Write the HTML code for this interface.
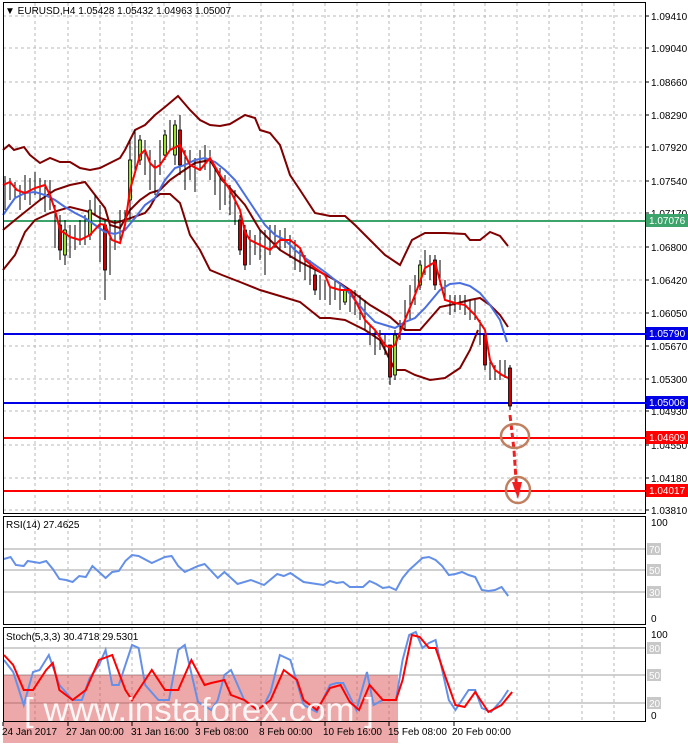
<!DOCTYPE html>
<html><head><style>
body{margin:0;background:#fff;}
svg text{font-family:"Liberation Sans",sans-serif;font-size:10px;fill:#000;}
</style></head><body>
<svg width="688" height="743" viewBox="0 0 688 743" xmlns="http://www.w3.org/2000/svg">
<rect width="688" height="743" fill="#fff"/>
<g stroke="#b8b8b8" stroke-dasharray="3,3" stroke-width="1">
<path d="M35 3V722M68 3V722M100 3V722M132 3V722M164 3V722M197 3V722M229 3V722M261 3V722M293 3V722M325 3V722M357 3V722M389 3V722M421 3V722M454 3V722M485 3V722M517 3V722M549 3V722M582 3V722M614 3V722"/>
<path d="M3 16H645M3 48H645M3 82H645M3 115H645M3 147H645M3 181H645M3 213H645M3 247H645M3 280H645M3 313H645M3 346H645M3 379H645M3 411H645M3 445H645M3 478H645M3 510H645"/>
</g>
<line x1="3" y1="221" x2="645" y2="221" stroke="#3ca46a" stroke-width="2"/>
<line x1="3" y1="334" x2="645" y2="334" stroke="#0000e6" stroke-width="2"/>
<line x1="3" y1="403" x2="645" y2="403" stroke="#0000e6" stroke-width="2"/>
<line x1="3" y1="438" x2="645" y2="438" stroke="#f00" stroke-width="2"/>
<line x1="3" y1="491" x2="645" y2="491" stroke="#f00" stroke-width="2"/>
<g fill="none" stroke="#800000" stroke-width="2">
<polyline points="3,150 9,145 14,150 24,147 30,155 40,163 50,158 60,162 70,162 80,168 90,170 100,168 110,163 120,158 125,150 135,130 145,125 155,115 165,107 178,96 190,110 200,120 210,125 220,126 230,124 245,115 255,118 260,130 270,133 280,145 290,175 300,190 315,213 330,216 345,216 355,225 370,240 385,255 400,265 412,240 425,233 445,233 465,234 470,240 480,240 490,232 500,236 508,246"/>
<polyline points="3,230 15,220 25,212 40,200 55,190 70,185 85,182 95,195 105,208 110,225 120,228 130,210 140,200 150,193 160,190 170,180 180,173 195,163 210,160 222,180 230,188 245,205 260,230 280,250 300,262 320,272 335,280 350,290 370,305 390,317 405,330 420,330 440,307 450,305 470,300 480,298 490,305 500,315 508,327"/>
<polyline points="3,270 15,255 25,232 35,220 50,213 70,207 90,212 100,218 115,223 125,220 145,213 150,207 155,198 160,194 170,194 180,203 190,235 200,250 210,270 222,275 240,282 260,290 280,296 300,302 320,318 330,318 345,320 355,325 365,330 380,340 390,360 395,370 405,370 415,375 430,380 445,378 460,368 470,350 478,330"/>
</g>
<g stroke="#000" stroke-width="1">
<path d="M5 176V210M10 178V200M15 182V198M20 185V210M25 175V200M30 178V205M35 172V195M40 178V200M45 180V212M50 180V210M55 205V248M60 215V260M65 220V265M70 225V258M75 225V250M80 220V245M85 215V245M90 200V240M95 195V215M100 205V262M105 220V300M110 225V275M115 220V250M120 210V240M125 210V230M130 140V220M135 130V175M140 135V165M145 140V175M150 150V190M155 160V195M160 140V175M165 130V160M170 120V150M175 120V165M180 115V175M185 150V190M190 150V180M195 158V192M200 150V170M205 145V170M210 150V180M215 165V195M220 168V210M225 175V205M230 185V215M235 190V225M240 215V255M245 225V270M250 230V265M255 235V255M260 230V260M265 230V275M270 225V255M275 225V248M280 230V250M285 228V248M290 235V258M295 240V270M300 250V272M305 255V280M310 260V285M315 270V295M320 275V300M325 280V300M330 285V305M335 280V300M340 285V310M345 290V305M350 290V312M355 290V315M360 295V320M365 300V330M370 325V345M375 330V355M380 330V350M385 335V355M390 345V385M395 330V380M400 320V340M405 300V330M410 285V320M415 275V305M420 260V290M425 250V275M430 255V280M435 255V290M440 260V285M445 280V300M450 295V315M455 295V312M460 295V310M465 295V315M470 300V320M475 300V320M480 320V345M485 330V370M490 360V380M495 365V380M500 360V380M505 360V378M510 365V410"/>
</g>
<g stroke="#000" stroke-width="0.8">
<rect x="128.5" y="160" width="3" height="40" fill="#9adf2a"/><rect x="138.5" y="140" width="3" height="20" fill="#9adf2a"/><rect x="163.5" y="135" width="3" height="20" fill="#9adf2a"/><rect x="173.5" y="125" width="3" height="30" fill="#9adf2a"/><rect x="178.5" y="130" width="3" height="35" fill="#c00"/><rect x="238.5" y="220" width="3" height="30" fill="#c00"/><rect x="243.5" y="230" width="3" height="35" fill="#c00"/><rect x="88.5" y="210" width="3" height="25" fill="#9adf2a"/><rect x="103.5" y="225" width="3" height="45" fill="#c00"/><rect x="388.5" y="345" width="3" height="32" fill="#c00"/><rect x="393.5" y="335" width="3" height="40" fill="#9adf2a"/><rect x="418.5" y="265" width="3" height="20" fill="#9adf2a"/><rect x="433.5" y="260" width="3" height="25" fill="#c00"/><rect x="483.5" y="335" width="3" height="30" fill="#c00"/><rect x="508.5" y="368" width="3" height="38" fill="#c00"/><rect x="58.5" y="225" width="3" height="25" fill="#c00"/><rect x="63.5" y="230" width="3" height="25" fill="#9adf2a"/><rect x="313.5" y="275" width="3" height="15" fill="#c00"/><rect x="343.5" y="290" width="3" height="12" fill="#9adf2a"/>
</g>
<polyline fill="none" stroke="#4a6ee0" stroke-width="2" points="3,215 10,205 15,198 25,193 35,192 45,195 55,200 65,207 75,213 85,218 95,225 105,232 115,234 125,230 135,218 145,205 155,198 165,180 175,168 185,165 195,160 205,158 215,162 225,170 235,180 245,195 255,210 265,225 275,235 285,240 295,250 305,258 315,265 325,272 335,280 345,288 355,300 365,312 375,322 385,325 395,328 405,322 415,318 425,308 440,290 450,284 460,283 470,286 480,293 490,305 500,320 507,342"/>
<polyline fill="none" stroke="#f00" stroke-width="2" points="3,185 10,182 17,190 25,193 35,188 45,185 50,195 55,210 60,230 70,237 80,240 90,235 100,224 105,225 112,240 120,243 125,225 130,190 140,155 145,150 150,163 155,168 160,165 170,150 180,145 190,165 200,170 210,158 220,175 230,190 240,210 245,232 250,240 260,245 270,250 280,240 290,240 300,248 305,260 315,268 325,275 330,287 340,290 350,290 360,310 365,320 375,330 385,345 390,348 395,345 405,320 415,295 425,268 435,262 445,300 455,303 465,305 475,315 485,330 490,360 495,370 502,375 508,378"/>
<path d="M510 415 L514 450 L517 494" stroke="#f02020" stroke-width="3" fill="none" stroke-dasharray="6,3"/>
<path d="M512 482 L518 499 L522 482" fill="#f02020"/>
<ellipse cx="515" cy="436" rx="14" ry="12" fill="none" stroke="#c08060" stroke-width="2.5"/>
<ellipse cx="518" cy="490" rx="12" ry="13" fill="none" stroke="#c08060" stroke-width="2.5"/>
<rect x="0" y="513" width="688" height="3" fill="#fff"/>
<g stroke="#c0c0c0" stroke-width="1.5"><path d="M3 549H645M3 570H645M3 592H645"/></g>
<g transform="scale(1.32,1)">
<polyline fill="none" stroke="#6490e8" stroke-width="2" vector-effect="non-scaling-stroke" points="3,559 8,557 12,565 18,566 21,561 30,563 35,561 40,569 45,579 50,580 55,582 60,576 65,577 70,566 75,572 80,578 85,572 90,571 95,561 100,555 105,556 115,563 120,560 125,557 130,556 135,566 140,572 150,566 155,564 165,578 170,572 180,584 190,580 200,585 210,574 215,576 220,573 230,582 240,584 245,585 250,581 255,583 260,582 265,587 275,587 280,581 285,584 290,588 295,587 300,590 305,578 310,570 315,564 320,558 325,557 330,560 335,566 340,575 345,574 350,572 355,575 360,577 365,590 370,591 375,590 380,587 385,596"/>
</g>
<g stroke="#c0c0c0" stroke-width="1.5"><path d="M3 648H645M3 675H645M3 703H645"/></g>
<rect x="3" y="675" width="395" height="68" fill="#d84040" opacity="0.45"/>
<g transform="scale(1.32,1)">
<polyline fill="none" stroke="#6490e8" stroke-width="2" vector-effect="non-scaling-stroke" points="3,660 10,672 18,705 25,672 30,670 37,655 45,685 55,700 62,700 68,678 75,665 80,650 85,685 90,685 100,645 105,648 110,685 120,700 128,700 135,650 140,645 150,702 160,710 165,700 170,675 175,670 185,700 195,710 200,705 205,692 212,655 220,660 230,705 240,712 250,685 255,683 260,683 270,710 278,672 283,705 290,700 300,700 305,660 310,635 315,632 320,648 325,643 330,640 340,700 345,710 355,690 360,690 365,708 372,712 380,700 385,690"/>
<polyline fill="none" stroke="#f00" stroke-width="2" vector-effect="non-scaling-stroke" points="3,655 10,665 18,690 25,690 35,670 40,663 45,690 55,700 65,690 75,660 85,655 95,690 100,700 110,680 115,670 125,690 135,690 145,660 155,685 160,683 170,680 175,695 185,700 195,710 205,700 215,670 225,680 230,700 240,710 250,688 258,685 265,702 272,710 280,685 290,700 300,700 305,680 312,635 318,637 325,648 330,648 337,675 345,705 352,707 360,692 370,712 380,705 388,692"/>
</g>
<text x="24" y="721" textLength="350" lengthAdjust="spacingAndGlyphs" style="font-size:33px;fill:#fff;opacity:0.9">[ www.instaforex.com ]</text>
<g fill="none" stroke="#000" stroke-width="1">
<rect x="3.5" y="2.5" width="642" height="511"/>
<rect x="3.5" y="516.5" width="642" height="108"/>
<rect x="3.5" y="627.5" width="642" height="94"/>
</g>
<g stroke="#000"><path d="M645 16h4M645 48h4M645 82h4M645 115h4M645 147h4M645 181h4M645 213h4M645 247h4M645 280h4M645 313h4M645 346h4M645 379h4M645 411h4M645 445h4M645 478h4M645 510h4M3 722v4M68 722v4M132 722v4M197 722v4M261 722v4M325 722v4M389 722v4M454 722v4"/></g>
<g>
<text x="651" y="20">1.09410</text><text x="651" y="52">1.09040</text><text x="651" y="86">1.08660</text><text x="651" y="119">1.08290</text><text x="651" y="151">1.07920</text><text x="651" y="185">1.07540</text><text x="651" y="217">1.07170</text><text x="651" y="251">1.06800</text><text x="651" y="284">1.06420</text><text x="651" y="317">1.06050</text><text x="651" y="350">1.05670</text><text x="651" y="383">1.05300</text><text x="651" y="415">1.04930</text><text x="651" y="449">1.04550</text><text x="651" y="482">1.04180</text><text x="651" y="514">1.03810</text>
</g>
<rect x="646" y="214" width="42" height="13" fill="#3ca46a"/><text x="649" y="224" style="fill:#fff">1.07076</text>
<rect x="646" y="327" width="42" height="13" fill="#0000e6"/><text x="649" y="337" style="fill:#fff">1.05790</text>
<rect x="646" y="396" width="42" height="13" fill="#0000e6"/><text x="649" y="406" style="fill:#fff">1.05006</text>
<rect x="646" y="431" width="42" height="13" fill="#f00"/><text x="649" y="441" style="fill:#fff">1.04609</text>
<rect x="646" y="484" width="42" height="13" fill="#f00"/><text x="649" y="494" style="fill:#fff">1.04017</text>
<text x="651" y="526">100</text>
<rect x="647" y="543" width="14" height="12" fill="#c8c8c8"/><text x="649" y="553" style="fill:#fff">70</text>
<rect x="647" y="564" width="14" height="12" fill="#c8c8c8"/><text x="649" y="574" style="fill:#fff">50</text>
<rect x="647" y="586" width="14" height="12" fill="#c8c8c8"/><text x="649" y="596" style="fill:#fff">30</text>
<text x="651" y="622">0</text>
<text x="651" y="638">100</text>
<rect x="647" y="642" width="14" height="12" fill="#c8c8c8"/><text x="649" y="652" style="fill:#fff">80</text>
<rect x="647" y="669" width="14" height="12" fill="#c8c8c8"/><text x="649" y="679" style="fill:#fff">50</text>
<rect x="647" y="697" width="14" height="12" fill="#c8c8c8"/><text x="649" y="707" style="fill:#fff">20</text>
<text x="651" y="719">0</text>
<text x="5" y="14">▼ EURUSD,H4  1.05428 1.05432 1.04963 1.05007</text>
<text x="6" y="528">RSI(14) 27.4625</text>
<text x="6" y="640">Stoch(5,3,3) 30.4718 29.5301</text>
<g>
<text x="2" y="735">24 Jan 2017</text><text x="66" y="735">27 Jan 00:00</text><text x="131" y="735">31 Jan 16:00</text><text x="195" y="735">3 Feb 08:00</text><text x="259" y="735">8 Feb 00:00</text><text x="323" y="735">10 Feb 16:00</text><text x="388" y="735">15 Feb 08:00</text><text x="452" y="735">20 Feb 00:00</text>
</g>
</svg>
</body></html>
